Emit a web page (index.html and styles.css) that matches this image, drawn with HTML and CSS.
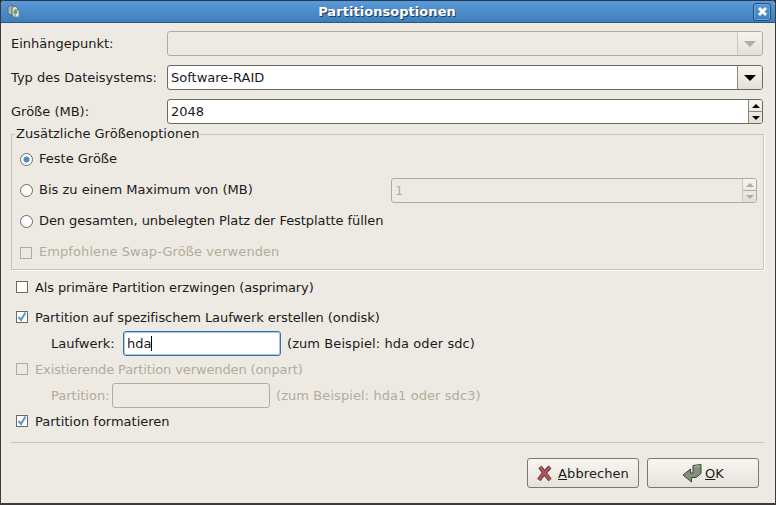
FILE: index.html
```html
<!DOCTYPE html>
<html lang="de">
<head>
    <meta charset="UTF-8">
    <meta name="viewport" content="width=device-width, initial-scale=1.0">
    <title>Partitionsoptionen</title>
    <link rel="stylesheet" href="styles.css">
</head>
<body>
    <div class="window">
        <header class="titlebar">
            <svg class="app-icon" width="14" height="15" viewBox="0 0 14 15">
                <path d="M1 3l4-2 2 2v7l-4 1-2-2z" fill="#aeb4ba" stroke="#5d666e"/>
                <path d="M5 3l4-1 2 3v7l-4 2-2-3z" fill="#d6dadc" stroke="#5d666e"/>
                <path d="M8 6h4v7H8z" fill="#e8ecea" stroke="#7c858c"/>
                <circle cx="8.5" cy="8" r="2" fill="#4fae5a"/>
            </svg>
            <h1 class="title">Partitionsoptionen</h1>
            <div class="close-btn">
                <svg width="11" height="11" viewBox="0 0 11 11"><path d="M2 2l7 7M9 2l-7 7" stroke="#fff" stroke-width="3"/></svg>
            </div>
        </header>
        <main class="content">
            <div class="form-row">
                <label class="row-label">Einhängepunkt:</label>
                <div class="field disabled grow">
                    <div class="field-text"></div>
                    <div class="combo-btn"><span class="arrow-down muted"></span></div>
                </div>
            </div>
            <div class="form-row">
                <label class="row-label">Typ des Dateisystems:</label>
                <div class="field grow">
                    <div class="field-text">Software-RAID</div>
                    <div class="combo-btn"><span class="arrow-down"></span></div>
                </div>
            </div>
            <div class="form-row">
                <label class="row-label">Größe (MB):</label>
                <div class="field grow">
                    <div class="field-text">2048</div>
                    <div class="spin-btn">
                        <span class="spin-part"><span class="tri-up"></span></span>
                        <span class="spin-part"><span class="tri-down"></span></span>
                    </div>
                </div>
            </div>

            <section class="frame">
                <div class="legend">Zusätzliche Größenoptionen</div>
                <div class="option">
                    <span class="radio checked"></span><span class="opt-text">Feste Größe</span>
                </div>
                <div class="option">
                    <span class="radio"></span><span class="opt-text">Bis zu einem Maximum von (MB)</span>
                    <div class="field disabled max-field">
                        <div class="field-text mono">1</div>
                        <div class="spin-btn">
                            <span class="spin-part"><span class="tri-up muted"></span></span>
                            <span class="spin-part"><span class="tri-down muted"></span></span>
                        </div>
                    </div>
                </div>
                <div class="option">
                    <span class="radio"></span><span class="opt-text tight">Den gesamten, unbelegten Platz der Festplatte füllen</span>
                </div>
                <div class="option off">
                    <span class="check"></span><span class="opt-text wide">Empfohlene Swap-Größe verwenden</span>
                </div>
            </section>

            <div class="checks">
                <div class="check-row">
                    <span class="check on"></span><span class="tighter">Als primäre Partition erzwingen (asprimary)</span>
                </div>
                <div class="check-row">
                    <span class="check on">
                        <svg width="10" height="10" viewBox="0 0 10 10"><path d="M1.5 5l2.5 3L8.5 0.5" fill="none" stroke="#5a94d4" stroke-width="2"/></svg>
                    </span><span class="tight">Partition auf spezifischem Laufwerk erstellen (ondisk)</span>
                </div>
                <div class="sub-row">
                    <label class="sub-label drive-label">Laufwerk:</label>
                    <div class="field focused sub-field">
                        <div class="field-text">hda<span class="caret"></span></div>
                    </div>
                    <span class="wide">(zum Beispiel: hda oder sdc)</span>
                </div>
                <div class="check-row after-sub off">
                    <span class="check"></span><span class="tighter">Existierende Partition verwenden (onpart)</span>
                </div>
                <div class="sub-row off">
                    <label class="sub-label part-label">Partition:</label>
                    <div class="field disabled sub-field"></div>
                    <span class="wide">(zum Beispiel: hda1 oder sdc3)</span>
                </div>
                <div class="check-row after-sub">
                    <span class="check on">
                        <svg width="10" height="10" viewBox="0 0 10 10"><path d="M1.5 5l2.5 3L8.5 0.5" fill="none" stroke="#5a94d4" stroke-width="2"/></svg>
                    </span><span>Partition formatieren</span>
                </div>
            </div>

            <hr class="separator">

            <div class="actions">
                <button class="btn cancel-btn" type="button">
                    <svg width="16" height="17" viewBox="0 0 16 17">
                        <path d="M3 2c3 4 6 8 10 13M13 2C9 6 5 10 2 15" fill="none" stroke="#5e3a3c" stroke-width="4.2"/>
                        <path d="M3 2c3 4 6 8 10 13M13 2C9 6 5 10 2 15" fill="none" stroke="#b8545c" stroke-width="2.4"/>
                    </svg>
                    <span class="wide"><u>A</u>bbrechen</span>
                </button>
                <button class="btn ok-btn" type="button">
                    <svg width="21" height="19" viewBox="0 0 21 19"><path d="M11 1.5l8-1v9l-5 4H9.5v4.5L1 11l7.5-6v4H11z" fill="#84927a" stroke="#3d4436"/><path d="M12 2.5l6-.7" stroke="#b4bea9" fill="none"/></svg>
                    <span><u>O</u>K</span>
                </button>
            </div>
        </main>
    </div>
</body>
</html>
```
FILE: styles.css
```css
html, body {
    margin: 0;
    padding: 0;
}
body {
    font-family: "DejaVu Sans", sans-serif;
    font-size: 13px;
    color: #1a1a1a;
    background-color: #2c2c2c;
}
.window {
    width: 776px;
    height: 505px;
    box-sizing: border-box;
    display: flex;
    flex-direction: column;
    background-color: #edeae4;
    border: 1px solid #3b3a38;
    border-top: 0;
    border-bottom-width: 2px;
    border-radius: 5px 5px 0 0;
    overflow: hidden;
}
.titlebar {
    height: 23px;
    flex: none;
    display: flex;
    align-items: center;
    background: linear-gradient(#5b9ad6, #3d7ebd);
    border-top: 1px solid #1f3a57;
    border-bottom: 1px solid #2a5580;
    box-sizing: border-box;
}
.app-icon {
    margin-left: 6px;
}
.title {
    flex: 1;
    margin: 0;
    text-align: center;
    font-size: 13px;
    font-weight: bold;
    letter-spacing: 0.05px;
    color: #fff;
    text-shadow: 1px 1px 0 #1f3a57;
}
.close-btn {
    width: 18px;
    height: 18px;
    box-sizing: border-box;
    margin-right: 4px;
    display: flex;
    align-items: center;
    justify-content: center;
    border: 1px solid #24507c;
    border-radius: 3px;
    box-shadow: inset 0 0 0 1px #6fa3d8;
}
.content {
    flex: 1;
    display: flex;
    flex-direction: column;
    padding: 8px 11px 0 10px;
}
.form-row {
    display: flex;
    align-items: center;
    height: 25px;
    margin-bottom: 9px;
}
.row-label {
    width: 156px;
    flex: none;
}
.grow {
    flex: 1;
    margin-right: 1px;
}
.field {
    height: 25px;
    box-sizing: border-box;
    display: flex;
    background-color: #fff;
    border: 1px solid #6f6a60;
    border-radius: 3px;
}
.field.disabled {
    background-color: #edeae4;
    border-color: #b5ab9a;
    color: #b5ab9a;
}
.field.focused {
    border-color: #3c6fa6;
    box-shadow: inset 0 0 0 1px #a9c6e6;
}
.field-text {
    flex: 1;
    padding-left: 3px;
    line-height: 23px;
}
.mono {
    font-family: "DejaVu Sans Mono", monospace;
}
.caret {
    display: inline-block;
    width: 1px;
    height: 15px;
    vertical-align: -3px;
    background-color: #000;
}
.combo-btn {
    width: 24px;
    display: flex;
    align-items: center;
    justify-content: center;
    border-left: 1px solid #8d887c;
    background: linear-gradient(#f6f4f0, #e4e0d8);
    border-radius: 0 2px 2px 0;
}
.disabled .combo-btn {
    border-left-color: #cfc9bd;
}
.arrow-down {
    width: 0;
    height: 0;
    border-left: 6px solid transparent;
    border-right: 6px solid transparent;
    border-top: 6px solid #000;
}
.arrow-down.muted {
    border-top-color: #b5ab9a;
}
.spin-btn {
    width: 13px;
    display: flex;
    flex-direction: column;
    border-left: 1px solid #8d887c;
    background: linear-gradient(#f6f4f0, #e4e0d8);
    border-radius: 0 2px 2px 0;
}
.disabled .spin-btn {
    border-left-color: #cfc9bd;
}
.spin-part {
    flex: 1;
    display: flex;
    align-items: center;
    justify-content: center;
}
.spin-part + .spin-part {
    border-top: 1px solid #8d887c;
}
.disabled .spin-part + .spin-part {
    border-top-color: #b5ab9a;
}
.tri-up, .tri-down {
    width: 0;
    height: 0;
    border-left: 4px solid transparent;
    border-right: 4px solid transparent;
}
.tri-up {
    border-bottom: 4px solid #000;
}
.tri-down {
    border-top: 4px solid #000;
}
.tri-up.muted {
    border-bottom-color: #b5ab9a;
}
.tri-down.muted {
    border-top-color: #b5ab9a;
}
.frame {
    position: relative;
    box-sizing: border-box;
    height: 136px;
    margin: 1px 0 0 0;
    padding: 9px 0 0 8px;
    border: 1px solid #c9c4b9;
    box-shadow: 1px 1px 0 #fff;
}
.legend {
    position: absolute;
    top: -9px;
    left: 3px;
    padding: 0 1px;
    line-height: 16px;
    background-color: #edeae4;
}
.option {
    display: flex;
    align-items: center;
    height: 31px;
}
.opt-text {
    margin-left: 6px;
    position: relative;
    top: -1px;
}
.check + .opt-text {
    margin-left: 7px;
}
.max-field {
    width: 366px;
    margin-left: auto;
    margin-right: 6px;
}
.radio {
    width: 13px;
    height: 13px;
    box-sizing: border-box;
    flex: none;
    border: 1px solid #6f6a60;
    border-radius: 50%;
    background-color: #fff;
}
.radio.checked {
    background: radial-gradient(circle, #4a8ad4 0 2.5px, #fff 3.5px);
}
.check {
    width: 12px;
    height: 12px;
    box-sizing: border-box;
    flex: none;
    display: flex;
    border: 1px solid #b5ab9a;
    background-color: #edeae4;
}
.check.on {
    border-color: #6f6a60;
    background-color: #fff;
}
.off {
    color: #b5ab9a;
}
.tight {
    letter-spacing: -0.07px;
}
.tighter {
    letter-spacing: -0.12px;
}
.wide {
    letter-spacing: 0.08px;
}
.checks {
    display: flex;
    flex-direction: column;
    padding-left: 5px;
    margin-top: 5px;
}
.check-row {
    display: flex;
    align-items: center;
    gap: 7px;
    height: 24px;
    margin-bottom: 6px;
}
.check-row.after-sub {
    margin-top: 1px;
    margin-bottom: 0;
}
.sub-row {
    display: flex;
    align-items: center;
    height: 25px;
    margin-top: -4px;
}
.after-sub + .sub-row {
    margin-top: 2px;
}
.sub-label {
    padding-left: 35px;
    box-sizing: border-box;
}
.drive-label {
    width: 107px;
}
.part-label {
    width: 96px;
}
.sub-field {
    width: 158px;
    margin-right: 6px;
}
.separator {
    border: 0;
    border-top: 1px solid #c9c4b9;
    margin: 9px 0 0 0;
}
.actions {
    display: flex;
    justify-content: flex-end;
    gap: 8px;
    margin-top: 15px;
    padding-right: 5px;
}
.btn {
    width: 112px;
    height: 30px;
    display: flex;
    align-items: center;
    justify-content: center;
    padding: 0;
    font-family: inherit;
    font-size: 13px;
    color: #1a1a1a;
    border: 1px solid #7d776c;
    border-radius: 3px;
    background: linear-gradient(#f8f6f3, #e6e2db);
}
.cancel-btn {
    gap: 5px;
}
.ok-btn {
    gap: 2px;
}
```
